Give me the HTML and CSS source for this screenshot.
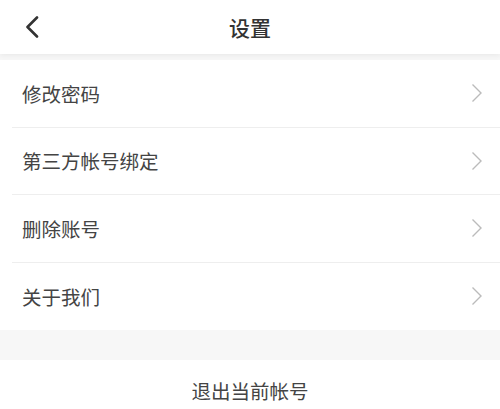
FILE: index.html
```html
<!DOCTYPE html>
<html lang="zh">
<head>
<meta charset="utf-8">
<title>设置</title>
<link rel="stylesheet" href="styles.css">
</head>
<body>
<div class="page">
  <header class="header">
    <span class="back">
      <svg width="16" height="22" viewBox="0 0 16 22"><path d="M13 1.5 L3.5 11 L13 20.5" fill="none" stroke="#333" stroke-width="2.6" stroke-linecap="round" stroke-linejoin="round"/></svg>
    </span>
    <h1 class="title">设置</h1>
  </header>
  <ul class="list">
    <li class="row"><span class="label">修改密码</span><svg class="arrow" width="12" height="20" viewBox="0 0 12 20"><path d="M1.5 1.5 L10 10 L1.5 18.5" fill="none" stroke="#bbb" stroke-width="1.4"/></svg></li>
    <li class="row"><span class="label">第三方帐号绑定</span><svg class="arrow" width="12" height="20" viewBox="0 0 12 20"><path d="M1.5 1.5 L10 10 L1.5 18.5" fill="none" stroke="#bbb" stroke-width="1.4"/></svg></li>
    <li class="row"><span class="label">删除账号</span><svg class="arrow" width="12" height="20" viewBox="0 0 12 20"><path d="M1.5 1.5 L10 10 L1.5 18.5" fill="none" stroke="#bbb" stroke-width="1.4"/></svg></li>
    <li class="row last"><span class="label">关于我们</span><svg class="arrow" width="12" height="20" viewBox="0 0 12 20"><path d="M1.5 1.5 L10 10 L1.5 18.5" fill="none" stroke="#bbb" stroke-width="1.4"/></svg></li>
  </ul>
  <div class="logout">退出当前帐号</div>
</div>
</body>
</html>
```
FILE: styles.css
```css
html, body {
  margin: 0;
  padding: 0;
  height: 100%;
  overflow: hidden;
}
body {
  background: #f7f7f7;
  font-family: "Noto Sans CJK SC", "Noto Sans", sans-serif;
  color: #444;
}
.page {
  display: flex;
  flex-direction: column;
}
.header {
  position: relative;
  height: 54px;
  background: #fff;
  display: flex;
  align-items: center;
  justify-content: center;
  box-shadow: 0 1px 6px rgba(0, 0, 0, 0.07);
  z-index: 1;
}
.back {
  position: absolute;
  left: 24px;
  top: 16px;
  display: flex;
}
.title {
  margin: 0;
  font-size: 21px;
  font-weight: 500;
  color: #333;
  line-height: 1;
}
.list {
  list-style: none;
  margin: 6px 0 0;
  padding: 0 0 0 12px;
  background: #fff;
}
.row {
  height: 67.5px;
  box-sizing: border-box;
  border-bottom: 1px solid #eee;
  display: flex;
  align-items: center;
  justify-content: space-between;
  padding: 0 17px 0 10px;
}
.row.last {
  border-bottom: none;
}
.label {
  font-size: 19.5px;
  color: #444;
  line-height: 1;
}
.arrow {
  display: block;
}
.logout {
  margin-top: 30px;
  height: 60px;
  background: #fff;
  display: flex;
  align-items: center;
  justify-content: center;
  font-size: 19.5px;
  color: #444;
}
```
